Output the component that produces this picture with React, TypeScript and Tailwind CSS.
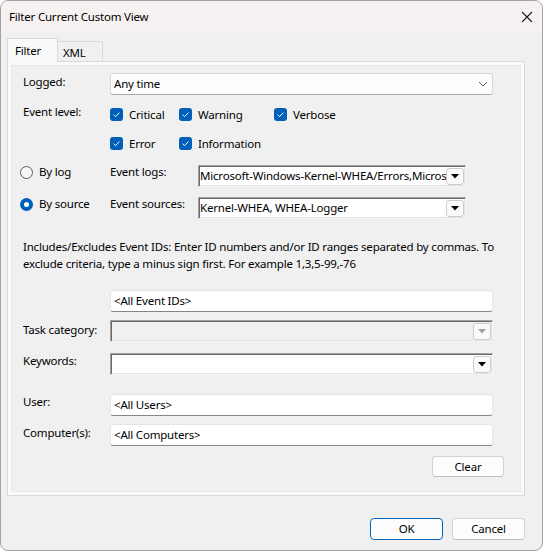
import React from 'react';

const Check = ({ label }: { label: string }) => (
  <div className="flex items-center h-[17px]">
    <span className="w-[13px] h-[13px] rounded-[3px] bg-[#005fb8] flex items-center justify-center shrink-0">
      <svg width="9" height="9" viewBox="0 0 9 9">
        <path d="M1.6 4.7 L3.6 6.6 L7.4 2.6" stroke="white" strokeWidth="1" fill="none" />
      </svg>
    </span>
    <span className="ml-[6px]">{label}</span>
  </div>
);

const Radio = ({ checked }: { checked?: boolean }) =>
  checked ? (
    <span className="w-[13px] h-[13px] rounded-full bg-[#005fb8] flex items-center justify-center shrink-0">
      <span className="block w-[5px] h-[5px] rounded-full bg-white" />
    </span>
  ) : (
    <span className="block w-[13px] h-[13px] rounded-full border border-[#5c5c5c] bg-[#f6f6f6] shrink-0" />
  );

const DropButton = ({ disabled }: { disabled?: boolean }) => (
  <span className="w-[18px] h-[17px] mr-[1px] rounded-[3px] border border-[#cdcdcd] bg-[#fafafa] flex items-center justify-center shrink-0">
    <svg width="8" height="5" viewBox="0 0 8 5">
      <polygon points="0,0 8,0 4,4.5" fill={disabled ? '#a0a0a0' : '#000'} />
    </svg>
  </span>
);

const sunken =
  'h-[22px] flex items-center border border-t-[#a0a0a0] border-l-[#a0a0a0] border-b-[#f4f4f4] border-r-[#f4f4f4] shadow-[inset_1px_1px_0_#696969,inset_-1px_-1px_0_#e3e3e3]';

const TextBox = ({ value }: { value: string }) => (
  <div className="w-[383px] h-[22px] bg-white border border-[#e5e5e5] border-b-[#868686] rounded-[3px] flex items-center pl-[3px]">
    {value}
  </div>
);

export default function App() {
  return (
    <div className="w-[543px] h-[551px] bg-[#f0f0f0] border border-[#a3a3a3] rounded-[8px] overflow-hidden font-['Noto_Sans',sans-serif] text-[11.5px] tracking-[-0.2px] text-black">
      {/* title bar */}
      <div className="h-[31px] bg-[#f7f2f1] flex items-center justify-between pl-[8px] pr-[9px]">
        <span>Filter Current Custom View</span>
        <svg width="12" height="12" viewBox="0 0 12 12">
          <path d="M1 1 L11 11 M11 1 L1 11" stroke="#1b1b1b" strokeWidth="1.1" />
        </svg>
      </div>

      {/* tabs */}
      <div className="flex items-end mt-[6px] ml-[6px] h-[24px] relative z-10">
        <div className="h-[24px] w-[51px] bg-[#f9f9f9] border border-b-0 border-[#d9d9d9] pl-[7px] pt-[3px]">Filter</div>
        <div className="h-[21px] w-[45px] bg-[#f0f0f0] border border-l-0 border-[#d9d9d9] pl-[5px] pt-[2px]">XML</div>
      </div>

      {/* tab panel */}
      <div className="ml-[6px] -mt-[1px] w-[518px] h-[435px] border border-[#d9d9d9] bg-[#fafafa] p-[3px]">
        <div className="h-full bg-[#f0f0f0] border border-[#e9e9e9] flex flex-col">
          {/* Logged */}
          <div className="flex mt-[7px] pl-[11px]">
            <span className="w-[87px] leading-[16px] pt-[1px]">Logged:</span>
            <div className="w-[383px] h-[22px] bg-[#fdfdfd] border border-[#d6d6d6] border-b-[#a9a9a9] rounded-[3px] flex items-center justify-between pl-[3px] pr-[4px]">
              <span>Any time</span>
              <svg width="10" height="6" viewBox="0 0 10 6">
                <path d="M1 1 L5 5 L9 1" stroke="#5f5f5f" strokeWidth="1" fill="none" />
              </svg>
            </div>
          </div>

          {/* Event level */}
          <div className="flex mt-[9px] pl-[11px]">
            <span className="w-[87px] leading-[16px]">Event level:</span>
            <div className="pt-[2px] flex flex-col gap-[12px]">
              <div className="flex">
                <div className="w-[69px]"><Check label="Critical" /></div>
                <div className="w-[95px]"><Check label="Warning" /></div>
                <Check label="Verbose" />
              </div>
              <div className="flex">
                <div className="w-[69px]"><Check label="Error" /></div>
                <Check label="Information" />
              </div>
            </div>
          </div>

          {/* By log */}
          <div className="flex items-start h-[22px] mt-[13px] pl-[8px]">
            <div className="mt-[1px] flex shrink-0"><Radio /></div>
            <span className="ml-[6px] w-[71px] shrink-0 leading-[16px] -mt-[1px]">By log</span>
            <span className="w-[88px] shrink-0 leading-[16px] -mt-[1px]">Event logs:</span>
            <div className={`w-[268px] shrink-0 bg-white pl-[1px] ${sunken}`}>
              <span className="flex-1 overflow-hidden whitespace-nowrap">
                Microsoft-Windows-Kernel-WHEA/Errors,Microsoft-Windows-Kernel-WHEA/Operational
              </span>
              <DropButton />
            </div>
          </div>

          {/* By source */}
          <div className="flex items-start h-[22px] mt-[10px] pl-[8px]">
            <div className="mt-[1px] flex shrink-0"><Radio checked /></div>
            <span className="ml-[6px] w-[71px] shrink-0 leading-[16px] -mt-[1px]">By source</span>
            <span className="w-[88px] shrink-0 leading-[16px] -mt-[1px]">Event sources:</span>
            <div className={`w-[268px] shrink-0 bg-white pl-[1px] ${sunken}`}>
              <span className="flex-1 overflow-hidden whitespace-nowrap">Kernel-WHEA, WHEA-Logger</span>
              <DropButton />
            </div>
          </div>

          {/* description */}
          <p className="mt-[19px] pl-[11px] leading-[17px] whitespace-nowrap">
            Includes/Excludes Event IDs: Enter ID numbers and/or ID ranges separated by commas. To
            <br />
            exclude criteria, type a minus sign first. For example 1,3,5-99,-76
          </p>

          <div className="flex mt-[18px] pl-[98px]">
            <TextBox value="<All Event IDs>" />
          </div>

          {/* Task category */}
          <div className="flex mt-[8px] pl-[11px]">
            <span className="w-[87px] leading-[16px] pt-[2px]">Task category:</span>
            <div className={`w-[383px] bg-[#f0f0f0] justify-end ${sunken}`}>
              <DropButton disabled />
            </div>
          </div>

          {/* Keywords */}
          <div className="flex mt-[11px] pl-[11px]">
            <span className="w-[87px] leading-[16px]">Keywords:</span>
            <div className={`w-[383px] bg-white justify-end ${sunken}`}>
              <DropButton />
            </div>
          </div>

          {/* User */}
          <div className="flex mt-[19px] pl-[11px]">
            <span className="w-[87px] leading-[16px]">User:</span>
            <TextBox value="<All Users>" />
          </div>

          {/* Computer */}
          <div className="flex mt-[8px] pl-[11px]">
            <span className="w-[87px] leading-[16px] pt-[1px]">Computer(s):</span>
            <TextBox value="<All Computers>" />
          </div>

          <div className="flex justify-end mt-[10px] pr-[16px]">
            <button className="w-[72px] h-[21px] bg-[#fdfdfd] border border-[#d3d3d3] border-b-[#bdbdbd] rounded-[4px] leading-none">
              Clear
            </button>
          </div>
        </div>
      </div>

      {/* footer buttons */}
      <div className="flex justify-end gap-[9px] mt-[22px] pr-[17px]">
        <button className="w-[73px] h-[22px] bg-[#fdfdfd] border border-[#0067c0] rounded-[4px] leading-none">OK</button>
        <button className="w-[73px] h-[22px] bg-[#fdfdfd] border border-[#d3d3d3] border-b-[#bdbdbd] rounded-[4px] leading-none">
          Cancel
        </button>
      </div>
    </div>
  );
}
